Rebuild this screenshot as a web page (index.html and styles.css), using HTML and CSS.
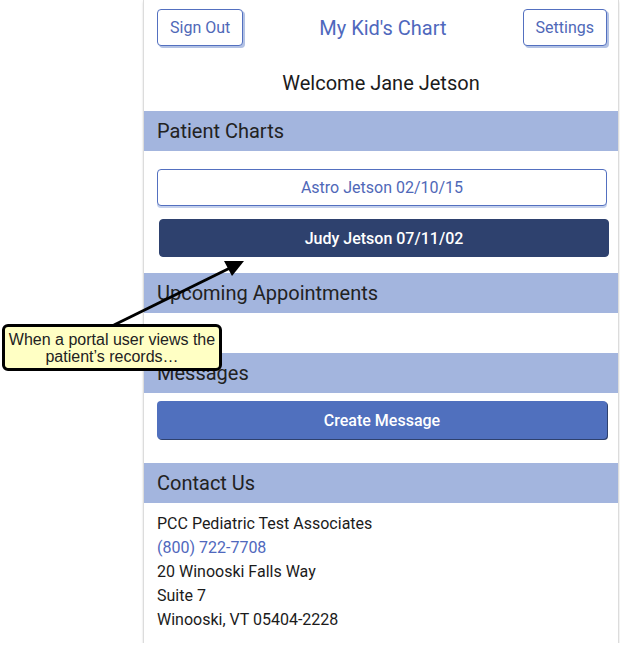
FILE: index.html
```html
<!DOCTYPE html>
<html lang="en">
<head>
    <meta charset="UTF-8">
    <title>My Kid's Chart</title>
    <link rel="stylesheet" href="styles.css">
</head>
<body>
    <div class="portal">
        <div class="topbar">
            <button class="btn-outline">Sign Out</button>
            <h1>My Kid's Chart</h1>
            <button class="btn-outline">Settings</button>
        </div>
        <div class="welcome">Welcome Jane Jetson</div>

        <h2 class="band">Patient Charts</h2>
        <div class="charts">
            <button class="chart">Astro Jetson 02/10/15</button>
            <button class="chart active">Judy Jetson 07/11/02</button>
        </div>

        <h2 class="band">Upcoming Appointments</h2>
        <div class="empty"></div>

        <h2 class="band">Messages</h2>
        <div class="messages">
            <button class="btn-primary">Create Message</button>
        </div>

        <h2 class="band">Contact Us</h2>
        <div class="contact">
            <div>PCC Pediatric Test Associates</div>
            <div class="phone">(800) 722-7708</div>
            <div>20 Winooski Falls Way</div>
            <div>Suite 7</div>
            <div>Winooski, VT 05404-2228</div>
        </div>
    </div>

    <!-- annotation overlay -->
    <svg class="arrow" width="620" height="647" viewBox="0 0 620 647">
        <line x1="114" y1="325" x2="232" y2="267" stroke="#000" stroke-width="3"/>
        <polygon points="244,261 224,261 232,276" fill="#000"/>
    </svg>
    <div class="callout">When a portal user views the<br>patient’s records…</div>
</body>
</html>
```

FILE: styles.css
```css
body { margin: 0; background: #fff; font-family: Roboto, "Liberation Sans", sans-serif; color: #222; }

.portal {
    width: 474px;
    margin-left: 143px;
    border-left: 1px solid #dcdcdc;
    border-right: 1px solid #dcdcdc;
    padding-bottom: 11px;
    box-shadow: 0 2px 2px rgba(0, 0, 0, 0.15);
}

button { font-family: Roboto, "Liberation Sans", sans-serif; font-size: 16px; cursor: pointer; }

.topbar {
    display: flex;
    align-items: center;
    justify-content: space-between;
    padding: 9px 11px 0 13px;
}
.topbar h1 { margin: 0; font-size: 20px; font-weight: 400; color: #4f68bd; }
.btn-outline {
    height: 37px;
    padding: 0 12px;
    background: #fff;
    color: #4f68b8;
    border: 1px solid #5370c0;
    border-radius: 4px;
    box-shadow: 2px 2px 0 #b3c2e4;
}

.welcome { text-align: center; font-size: 20px; line-height: 24px; padding: 25px 0 16px; color: #1b1b1b; }

.band {
    margin: 0;
    height: 40px;
    line-height: 40px;
    padding-left: 13px;
    background: #a3b5de;
    font-size: 20px;
    font-weight: 400;
    color: #222;
}

.charts { display: flex; flex-direction: column; gap: 13px; padding: 18px 11px 16px 13px; }
.chart {
    height: 37px;
    background: #fff;
    color: #4f68b8;
    border: 1px solid #5370c0;
    border-radius: 4px;
    box-shadow: 0 2px 0 #c4d0ec;
}
.chart.active {
    height: 38px;
    margin: 0 -2px 0 2px;
    background: #2e416e;
    color: #fff;
    border-color: #2e416e;
    font-weight: 500;
    box-shadow: none;
}

.empty { height: 40px; }

.messages { padding: 8px 11px 24px 13px; }
.btn-primary {
    width: 100%;
    height: 38px;
    background: #5070be;
    color: #fff;
    border: none;
    border-radius: 4px;
    font-weight: 500;
    box-shadow: 1px 1px 0 #2e416e;
}

.contact { padding: 9px 13px 0; font-size: 16px; line-height: 24px; color: #1b1b1b; }
.contact .phone { color: #5068bd; }

/* annotation */
.arrow { position: absolute; left: 0; top: 0; pointer-events: none; }
.callout {
    position: absolute;
    left: 2px;
    top: 324px;
    width: 214px;
    height: 41px;
    border: 3px solid #000;
    border-radius: 6px;
    background: #ffffc4;
    font-family: "Liberation Sans", Arial, sans-serif;
    font-size: 16px;
    line-height: 17px;
    text-align: center;
    display: flex;
    align-items: center;
    justify-content: center;
}
```
